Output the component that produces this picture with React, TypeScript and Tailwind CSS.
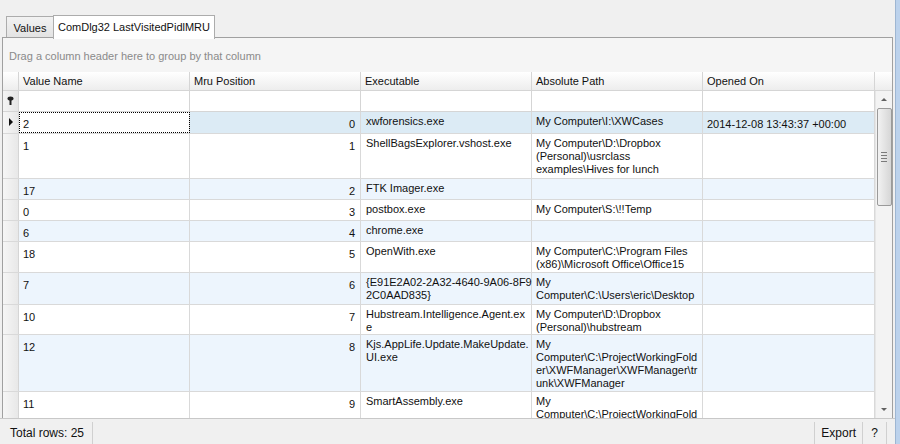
const COLS = [
  { label: "Value Name", w: "w-[171px]" },
  { label: "Mru Position", w: "w-[171px]" },
  { label: "Executable", w: "w-[171px]" },
  { label: "Absolute Path", w: "w-[171px]" },
  { label: "Opened On", w: "w-[172px]" },
];

type Row = {
  name: string;
  pos: string;
  exe: string[];
  path: string[];
  opened: string;
  h: string;
};

const ROWS: Row[] = [
  { name: "2", pos: "0", exe: ["xwforensics.exe"], path: ["My Computer\\I:\\XWCases"], opened: "2014-12-08 13:43:37 +00:00", h: "h-[22px]" },
  { name: "1", pos: "1", exe: ["ShellBagsExplorer.vshost.exe"], path: ["My Computer\\D:\\Dropbox", "(Personal)\\usrclass", "examples\\Hives for lunch"], opened: "", h: "h-[45px]" },
  { name: "17", pos: "2", exe: ["FTK Imager.exe"], path: [], opened: "", h: "h-[21px]" },
  { name: "0", pos: "3", exe: ["postbox.exe"], path: ["My Computer\\S:\\!!Temp"], opened: "", h: "h-[21px]" },
  { name: "6", pos: "4", exe: ["chrome.exe"], path: [], opened: "", h: "h-[21px]" },
  { name: "18", pos: "5", exe: ["OpenWith.exe"], path: ["My Computer\\C:\\Program Files", "(x86)\\Microsoft Office\\Office15"], opened: "", h: "h-[31px]" },
  { name: "7", pos: "6", exe: ["{E91E2A02-2A32-4640-9A06-8F9", "2C0AAD835}"], path: ["My", "Computer\\C:\\Users\\eric\\Desktop"], opened: "", h: "h-[32px]" },
  { name: "10", pos: "7", exe: ["Hubstream.Intelligence.Agent.ex", "e"], path: ["My Computer\\D:\\Dropbox", "(Personal)\\hubstream"], opened: "", h: "h-[30px]" },
  { name: "12", pos: "8", exe: ["Kjs.AppLife.Update.MakeUpdate.", "UI.exe"], path: ["My", "Computer\\C:\\ProjectWorkingFold", "er\\XWFManager\\XWFManager\\tr", "unk\\XWFManager"], opened: "", h: "h-[57px]" },
  { name: "11", pos: "9", exe: ["SmartAssembly.exe"], path: ["My", "Computer\\C:\\ProjectWorkingFold"], opened: "", h: "h-[40px]" },
];

function Lines({ lines }: { lines: string[] }) {
  return (
    <>
      {lines.map((l, i) => (
        <div key={i} className="whitespace-pre leading-[13px]">
          {l}
        </div>
      ))}
    </>
  );
}

function Scrollbar() {
  return (
    <div className="w-[17px] flex-1 bg-[#f3f3f3] border-l border-[#e6e6e6] flex flex-col items-center">
      <div className="h-[17px] w-full flex items-center justify-center">
        <div className="w-0 h-0 border-l-[3px] border-r-[3px] border-b-[3px] border-l-transparent border-r-transparent border-b-[#606060]" />
      </div>
      <div className="w-[15px] h-[98px] rounded-[2px] border border-[#9a9a9a] bg-gradient-to-r from-[#f2f2f2] via-[#e4e4e4] to-[#d6d6d6] flex flex-col items-center justify-center gap-[2px]">
        <div className="w-[6px] h-px bg-[#7a7a7a]" />
        <div className="w-[6px] h-px bg-[#7a7a7a]" />
        <div className="w-[6px] h-px bg-[#7a7a7a]" />
        <div className="w-[6px] h-px bg-[#7a7a7a]" />
      </div>
      <div className="flex-1" />
      <div className="h-[17px] w-full flex items-center justify-center">
        <div className="w-0 h-0 border-l-[3px] border-r-[3px] border-t-[3px] border-l-transparent border-r-transparent border-t-[#606060]" />
      </div>
    </div>
  );
}

export default function App() {
  return (
    <div className="w-[900px] h-[444px] overflow-hidden bg-[#f0f0f0] flex font-['Liberation_Sans',Arial,sans-serif] text-[11px] text-[#111]">
      <div className="w-[895px] flex flex-col">
        {/* tabs */}
        <div className="h-[38px] shrink-0 flex items-end pl-[6px]">
          <div className="h-[21px] w-[48px] border border-b-0 border-[#acacac] bg-gradient-to-b from-[#f2f2f2] to-[#e3e3e3] flex items-center justify-center mb-px pt-[2px]">
            Values
          </div>
          <div className="h-[24px] w-[162px] -ml-px border border-b-0 border-[#acacac] bg-white flex items-center justify-center relative top-px z-10">
            ComDlg32 LastVisitedPidlMRU
          </div>
        </div>

        {/* panel */}
        <div className="flex-1 mx-[2px] border border-[#a0a0a0] border-b-0 bg-white flex flex-col min-h-0 -mt-px">
          <div className="h-[34px] shrink-0 bg-[#f5f5f5] flex items-center pl-[6px] pt-[2px] text-[#8a8a8a]">
            Drag a column header here to group by that column
          </div>
          <div className="flex flex-1 min-h-0">
            <div className="flex flex-col min-h-0 overflow-hidden">
              {/* header */}
              <div className="flex h-[19px] shrink-0 bg-gradient-to-b from-white to-[#ededed] border-b border-[#d5d5d5]">
                <div className="w-[16px] border-r border-[#d5d5d5]" />
                {COLS.map((c) => (
                  <div key={c.label} className={`${c.w} border-r border-[#d5d5d5] pl-[4px] flex items-center`}>
                    {c.label}
                  </div>
                ))}
              </div>
              {/* filter row */}
              <div className="flex h-[21px] shrink-0 border-b border-[#d5d5d5] bg-white">
                <div className="w-[16px] border-r border-[#d5d5d5] bg-gradient-to-r from-[#f4f4f4] to-[#e6e6e6] flex items-center justify-center">
                  <svg width="7" height="10" viewBox="0 0 7 10">
                    <ellipse cx="3.5" cy="2.5" rx="3" ry="2" fill="#222" />
                    <rect x="2.5" y="4" width="2" height="5" fill="#222" />
                  </svg>
                </div>
                {COLS.map((c) => (
                  <div key={c.label} className={`${c.w} border-r border-[#d5d5d5]`} />
                ))}
              </div>
              {/* data rows */}
              {ROWS.map((r, i) => {
                const sel = i === 0;
                const bg = sel ? "bg-[#dcebf5]" : i % 2 === 0 ? "bg-[#edf5fd]" : "bg-white";
                return (
                  <div key={r.name} className={`flex ${r.h} shrink-0 border-b border-[#d9d9d9] ${bg}`}>
                    <div className="w-[16px] shrink-0 border-r border-[#d5d5d5] bg-gradient-to-r from-[#f6f6f6] to-[#e8e8e8] flex justify-center pt-[6px]">
                      {sel && (
                        <div className="w-0 h-0 border-t-[4px] border-b-[4px] border-l-[4px] border-t-transparent border-b-transparent border-l-[#111]" />
                      )}
                    </div>
                    <div className={`w-[171px] shrink-0 border-r border-[#d9d9d9] pl-[4px] pt-[4px] ${sel ? "bg-white outline outline-1 outline-dotted outline-black -outline-offset-1" : ""}`}>
                      {r.name}
                    </div>
                    <div className="w-[171px] shrink-0 border-r border-[#d9d9d9] pr-[5px] pt-[4px] text-right">
                      {r.pos}
                    </div>
                    <div className="w-[171px] shrink-0 border-r border-[#d9d9d9] pl-[5px] pt-[3px]">
                      <Lines lines={r.exe} />
                    </div>
                    <div className="w-[171px] shrink-0 border-r border-[#d9d9d9] pl-[4px] pt-[3px]">
                      <Lines lines={r.path} />
                    </div>
                    <div className="w-[172px] shrink-0 border-r border-[#d9d9d9] pl-[4px] pt-[4px]">
                      {r.opened}
                    </div>
                  </div>
                );
              })}
            </div>
            <div className="flex flex-col">
              <div className="h-[19px] w-[17px] shrink-0 bg-gradient-to-b from-white to-[#ededed] border-b border-[#d5d5d5]" />
              <Scrollbar />
            </div>
          </div>
        </div>

        {/* status bar */}
        <div className="h-[26px] shrink-0 border-t border-[#c8c8c8] bg-[#f0f0f0] flex items-end text-[12px]">
          <div className="pl-[10px] pr-[8px] h-[22px] flex items-center border-r border-[#d0d0d0]">
            Total rows: 25
          </div>
          <div className="flex-1" />
          <div className="px-[6px] h-[22px] flex items-center border-l border-r border-[#d0d0d0]">
            Export
          </div>
          <div className="w-[24px] h-[22px] flex items-center justify-center border-r border-[#d0d0d0]">
            ?
          </div>
          <div className="w-[8px]" />
        </div>
      </div>
      <div className="flex-1 bg-[#bcd2ec] border-l border-[#9eb6d2]" />
    </div>
  );
}
